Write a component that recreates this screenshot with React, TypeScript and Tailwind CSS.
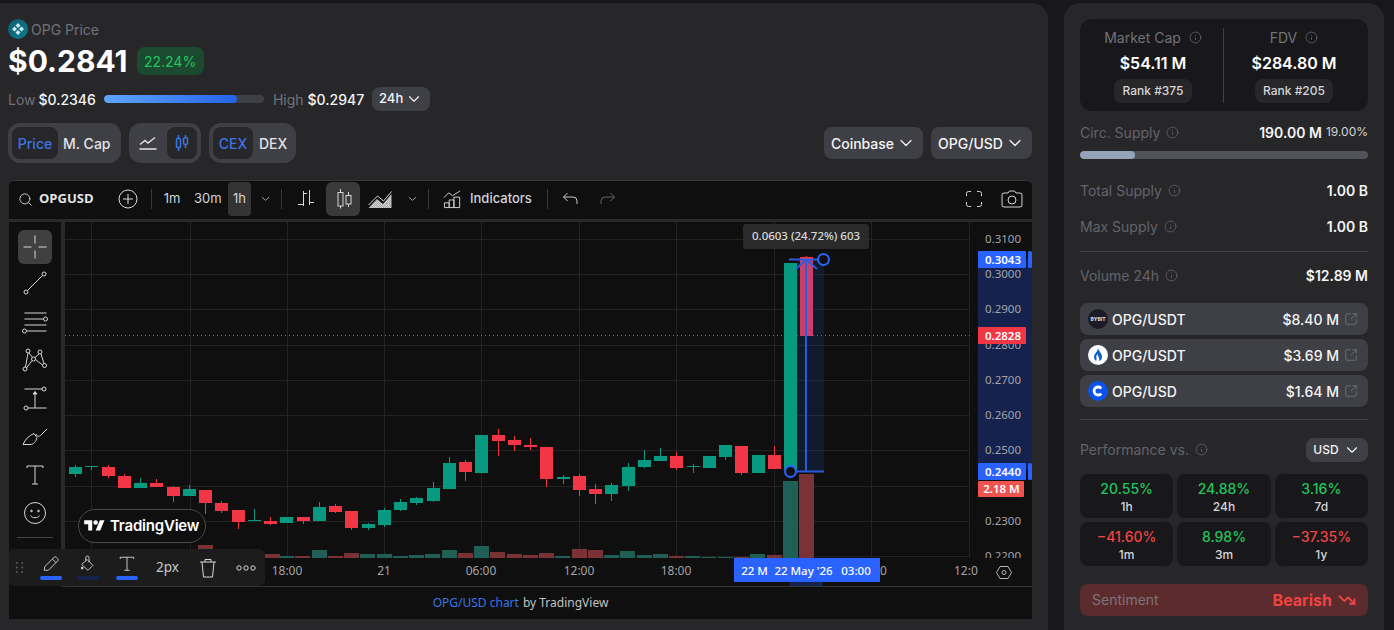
import React from "react";
import { ChevronDown, Info, SquareArrowOutUpRight, TrendingDown, Search } from "lucide-react";

const G = "#089981";
const R = "#f23645";
// x, bodyTop, bodyBottom, wickTop, wickBottom, colour
const candles: [number, number, number, number, number, string][] = [
  [69, 467, 474, 465, 477, G], [85, 466, 467, 466, 470, G], [102, 467, 476, 465, 478, R], [118, 476, 488, 474, 488, R],
  [134, 483, 488, 478, 488, G], [150, 483, 487, 479, 487, R], [167, 487, 496, 486, 502, R], [183, 489, 496, 485, 496, G],
  [199, 490, 503, 490, 514, R], [215, 503, 511, 501, 513, R], [232, 510, 522, 510, 529, R], [248, 520, 521, 509, 521, G],
  [264, 521, 524, 517, 525, R], [280, 517, 523, 517, 523, G], [297, 517, 521, 517, 524, R], [313, 507, 521, 502, 521, G],
  [329, 506, 512, 504, 513, R], [345, 511, 528, 511, 530, R], [362, 524, 528, 523, 530, G], [378, 510, 525, 508, 527, G],
  [394, 502, 510, 499, 511, G], [410, 498, 503, 497, 505, G], [427, 488, 501, 482, 502, G], [443, 463, 489, 457, 489, G],
  [459, 462, 472, 460, 481, R], [475, 435, 473, 435, 473, G], [492, 435, 441, 429, 456, R], [508, 440, 445, 436, 451, R],
  [524, 445, 447, 438, 450, R], [540, 447, 479, 447, 487, R], [557, 477, 479, 475, 484, G], [573, 476, 490, 474, 496, R],
  [589, 489, 494, 484, 504, R], [605, 485, 494, 483, 501, G], [622, 467, 486, 463, 491, G], [638, 460, 467, 450, 468, G],
  [654, 456, 461, 448, 461, G], [670, 456, 468, 452, 470, R], [687, 466, 467, 464, 473, G], [703, 456, 468, 456, 468, G],
  [719, 445, 457, 445, 460, G], [735, 446, 473, 446, 475, R], [752, 455, 473, 455, 473, G], [768, 455, 469, 446, 469, R],
  [784, 263, 470, 263, 470, G], [800, 257, 336, 256, 336, R],
];
const VG = "#1f5f56";
const VR = "#7a3236";
const volumes: [number, number, string][] = [
  [198, 545, VR], [265, 554, VR], [279, 556, VG], [295, 556, VR], [312, 550, VG], [328, 556, VR], [344, 553, VR], [360, 554, VG],
  [377, 554, VG], [393, 556, VG], [409, 555, VG], [425, 554, VG], [442, 550, VG], [458, 553, VR], [474, 546, VG],
  [490, 552, VR], [507, 554, VR], [523, 555, VR], [539, 553, VR], [555, 556, VG], [572, 549, VR], [588, 550, VR],
  [604, 555, VG], [620, 551, VG], [637, 555, VG], [653, 554, VG], [669, 556, VR], [685, 556, VG], [701, 557, VG],
  [718, 557, VG], [734, 557, VR], [750, 554, VG], [767, 555, VR], [783, 481, VG], [799, 474, VR],
];
const gridX = [91, 190, 287, 384, 481, 579, 676, 774, 871, 969];
const gridY = [239, 274, 309, 345, 380, 415, 450, 486, 521, 556];
const prices: [string, number][] = [
  ["0.3100", 239], ["0.3000", 274], ["0.2900", 309], ["0.2800", 345], ["0.2700", 380],
  ["0.2600", 415], ["0.2500", 450], ["0.2300", 521], ["0.2200", 556],
];
const times: [string, number][] = [["18:00", 287], ["21", 384], ["06:00", 481], ["12:00", 579], ["18:00", 676]];

function Chart() {
  const axisFont = "'Noto Sans', sans-serif";
  return (
    <svg viewBox="65 222 967 365" className="block w-[967px] h-[365px] shrink-0" style={{ fontFamily: axisFont }}>
      <rect x="65" y="222" width="967" height="365" fill="#0f0f0f" />
      {gridX.map((x) => <line key={x} x1={x + 0.5} x2={x + 0.5} y1="222" y2="556" stroke="#232323" />)}
      {gridY.map((y) => <line key={y} x1="65" x2="970" y1={y + 0.5} y2={y + 0.5} stroke="#232323" />)}
      <line x1="65" x2="975" y1="335.5" y2="335.5" stroke={R} strokeDasharray="1 3" />
      {volumes.map(([x, t, c], i) => <rect key={i} x={x} y={t} width="15" height={558 - t} fill={c} />)}
      <rect x="797" y="259" width="27" height="212" fill="#2962ff" fillOpacity="0.13" />
      {candles.map(([x, t, b, wt, wb, c], i) => (
        <g key={i}>
          <line x1={x + 6.5} x2={x + 6.5} y1={wt} y2={wb} stroke={c} />
          <rect x={x} y={t} width="13" height={b - t} fill={c} />
        </g>
      ))}
      <rect x="800" y="259" width="13" height="77" fill="#2962ff" fillOpacity="0.2" />
      <path d="M789 259.500H819M806 259.500V471M790 471.500H824M796 269L806 259.500L817 269" fill="none" stroke="#2d5be0" strokeWidth="2" />
      <circle cx="823.500" cy="259.500" r="5.500" fill="#0f0f0f" stroke="#2962ff" strokeWidth="2" />
      <circle cx="790.500" cy="471.500" r="5.500" fill="#0f0f0f" stroke="#2962ff" strokeWidth="2" />
      <rect x="743" y="224" width="126" height="25" rx="3" fill="#2a2a2a" />
      <text x="806" y="240" textAnchor="middle" fontSize="11.500" fontWeight="500" fill="#dbdbdb">0.0603 (24.72%) 603</text>

      <rect x="970" y="222" width="62" height="334" fill="#0f0f0f" />
      <rect x="978" y="259" width="54" height="212" fill="#14224d" />
      {prices.map(([p, y]) => <text key={p} x="1003" y={y + 3.500} textAnchor="middle" fontSize="11.500" fill="#a3a3a8">{p}</text>)}
      <rect x="978" y="251" width="48" height="17" rx="1" fill="#2962ff" />
      <text x="1003" y="263.500" textAnchor="middle" fontSize="11.500" fontWeight="600" fill="#fff">0.3043</text>
      <rect x="1028" y="251" width="4" height="17" rx="1.500" fill="#2962ff" />
      <rect x="978" y="327" width="48" height="17" rx="1" fill={R} />
      <text x="1003" y="339.500" textAnchor="middle" fontSize="11.500" fontWeight="600" fill="#fff">0.2828</text>
      <rect x="978" y="463" width="48" height="17" rx="1" fill="#2962ff" />
      <text x="1003" y="475.500" textAnchor="middle" fontSize="11.500" fontWeight="600" fill="#fff">0.2440</text>
      <rect x="1028" y="463" width="4" height="17" rx="1.500" fill="#2962ff" />
      <rect x="978" y="481" width="46" height="16" rx="1" fill="#ef5350" />
      <text x="1001.500" y="493" textAnchor="middle" fontSize="11.500" fontWeight="600" fill="#fff">2.18 M</text>

      <rect x="65" y="558" width="967" height="28" fill="#0f0f0f" />
      {times.map(([t, x]) => <text key={x} x={x} y="574.500" textAnchor="middle" fontSize="12" fill="#a3a3a8">{t}</text>)}
      <text x="880" y="574.500" fontSize="12" fill="#a3a3a8">0</text>
      <text x="954" y="574.500" fontSize="12" fill="#a3a3a8">12:0</text>
      <rect x="790" y="582" width="33" height="4" fill="#14224d" />
      <rect x="734" y="558" width="146" height="24" fill="#2962ff" />
      <text x="754.500" y="574.500" textAnchor="middle" fontSize="11.500" fontWeight="500" fill="#fff">22 M</text>
      <text x="803.500" y="574.500" textAnchor="middle" fontSize="11.500" fontWeight="500" fill="#fff">22 May '26</text>
      <text x="856" y="574.500" textAnchor="middle" fontSize="11.500" fontWeight="500" fill="#fff">03:00</text>
      <path d="M1000 566.500h8l3.500 6-3.500 6h-8l-3.500-6z" fill="none" stroke="#b8b8b8" />
      <circle cx="1004" cy="572.500" r="2" fill="none" stroke="#b8b8b8" />
      <line x1="65" x2="1032" y1="586.500" y2="586.500" stroke="#333" />
    </svg>
  );
}

function Tb({ children, className = "" }: { children: React.ReactNode; className?: string }) {
  return <svg viewBox="0 0 28 28" className={`w-7 h-7 shrink-0 ${className}`} fill="none" stroke="#d6d6d6" strokeWidth="1">{children}</svg>;
}
const Sep = ({ cls }: { cls: string }) => <div className={`w-px h-[20px] bg-[#3a3a3a] shrink-0 ${cls}`} />;
const Chev = ({ cls }: { cls: string }) => (
  <svg viewBox="0 0 10 6" className={`w-[9px] h-[6px] shrink-0 ${cls}`} fill="none" stroke="#a8a8a8"><path d="M1 1l4 3.500 4-3.500" /></svg>
);

function TopToolbar() {
  return (
    <div className="h-[38px] pb-[2px] shrink-0 flex items-center bg-[#0f0f0f] text-[#d1d4dc] text-[13px] font-['Inter',sans-serif]">
      <Search size={15} strokeWidth={1.400} className="ml-[9px] shrink-0 text-[#dcdcdc]" />
      <span className="ml-[6px] w-[53px] text-[13px] font-bold font-['Open_Sans',sans-serif] text-[#e4e4e4]">OPGUSD</span>
      <svg viewBox="0 0 20 20" className="ml-[26px] w-5 h-5 shrink-0" fill="none" stroke="#dcdcdc"><circle cx="10" cy="10" r="9" /><path d="M10 5v10M5 10h10" /></svg>
      <Sep cls="ml-[13px]" />
      <span className="ml-[10px] w-[20px] text-center">1m</span>
      <span className="ml-[12px] w-[26px] text-center">30m</span>
      <span className="ml-[8px] w-[23px] h-[34px] rounded bg-[#333] flex items-center justify-center">1h</span>
      <Chev cls="ml-[10px]" />
      <Sep cls="ml-[11px]" />
      <Tb className="ml-[9px]">
        <path d="M12.500 6v15M7 19.500h5.500M12.500 8.500h3.500M18.500 5v15M18.500 17.500h4.500" />
      </Tb>
      <div className="ml-[7px] w-[34px] h-[34px] rounded-md bg-[#3a3a3a] flex items-center justify-center">
        <Tb><path d="M11.500 4v3.500M11.500 21v2.500M19.500 7v3M19.500 19v3" /><rect x="9" y="7.500" width="5" height="13.500" /><rect x="17" y="10.500" width="5" height="8.500" /></Tb>
      </div>
      <svg viewBox="0 0 24 17" className="ml-[8px] w-6 h-[17px] shrink-0" fill="none" stroke="#d6d6d6">
        <defs><pattern id="hatch" width="2" height="2" patternUnits="userSpaceOnUse"><rect width="1" height="1" fill="#c8c8c8" /><rect x="1" y="1" width="1" height="1" fill="#c8c8c8" /></pattern></defs>
        <path d="M0.500 17L9 8l6 5 8.500-10V17z" fill="url(#hatch)" stroke="none" />
        <path d="M0.500 14L9.500 5l6 5L23.500 0.500" />
      </svg>
      <Chev cls="ml-[16px]" />
      <Sep cls="ml-[11px]" />
      <svg viewBox="0 0 20 20" className="ml-[14px] w-[19px] h-[19px] shrink-0" fill="none" stroke="#d6d6d6"><path d="M1 8l5-5 4 3 8-5M1.500 18.500h5v-5h-5zM6.500 18.500h5v-8h-5zM11.500 18.500h6v-11h-6z" /></svg>
      <span className="ml-[8px] w-[62px] whitespace-nowrap text-[13px] font-medium">Indicators</span>
      <Sep cls="ml-[15px]" />
      <svg viewBox="0 0 16 14" className="ml-[14px] w-4 h-[14px] shrink-0" fill="none" stroke="#c8c8c8"><path d="M5.500 1L1.500 5l4 4M1.500 5H11a4 4 0 014 4v3" /></svg>
      <svg viewBox="0 0 16 14" className="ml-[22px] w-4 h-[14px] shrink-0" fill="none" stroke="#666"><path d="M10.500 1l4 4-4 4M14.500 5H5a4 4 0 00-4 4v3" /></svg>
      <div className="flex-1" />
      <svg viewBox="0 0 18 18" className="w-[18px] h-[18px] shrink-0" fill="none" stroke="#d6d6d6"><path d="M6 1.500H3.500a2 2 0 00-2 2V6M12 1.500h2.500a2 2 0 012 2V6M6 16.500H3.500a2 2 0 01-2-2V12M12 16.500h2.500a2 2 0 002-2V12" /></svg>
      <svg viewBox="0 0 22 18" className="ml-[18px] mr-[9px] w-[22px] h-[18px] shrink-0" fill="none" stroke="#d6d6d6"><path d="M1 5a2 2 0 012-2h4l1.500-2h5L15 3h4a2 2 0 012 2v10a2 2 0 01-2 2H3a2 2 0 01-2-2z" /><circle cx="11" cy="10" r="4" /></svg>
    </div>
  );
}

function LeftTools() {
  return (
    <div className="w-[52px] h-[365px] shrink-0 bg-[#0f0f0f] flex flex-col items-center pt-2">
      <div className="w-[34px] h-[34px] rounded-md bg-[#404040] flex items-center justify-center">
        <Tb><path d="M14 2.500v8M14 17.500v8M2.500 14h8M17.500 14h8" /></Tb>
      </div>
      <Tb className="mt-[5px]"><circle cx="5" cy="23" r="2" /><circle cx="23" cy="5" r="2" /><path d="M6.500 21.500L21.500 6.500" /></Tb>
      <Tb className="mt-[10px]"><path d="M3.500 6h22M3.500 12h19M3.500 18h22M6 24h19.500" /><circle cx="24.500" cy="12" r="2" /><circle cx="3.500" cy="24" r="2" /></Tb>
      <Tb className="mt-[11px]"><circle cx="4" cy="23" r="2" /><circle cx="7" cy="5" r="2" /><circle cx="12.500" cy="13" r="2" /><circle cx="19" cy="6" r="2" /><circle cx="23.500" cy="19.500" r="2" /><path d="M4.500 21L7 7M8 7l3.500 4.500M14 11.500L18 8M20 8l3 9.500M5.500 22L11 14.500M14.500 13.500L21.500 19" /></Tb>
      <Tb className="mt-[10px]"><path d="M3.500 5h18M14 8v16M7 24h18.500" /><path d="M12 10l2-2.500 2 2.500z" fill="#d6d6d6" /><circle cx="23" cy="5" r="2" /><circle cx="5" cy="24" r="2" /></Tb>
      <Tb className="mt-[11px]"><path d="M2 21.500c2-5 6-9 11-11l3 4c-1 4-3 7-7 7zM2 21.500h7M15 11c1 3 4 3 6 0l5-5" /></Tb>
      <Tb className="mt-[9px]"><path d="M6 6h16M14 6v18M11 24h6M6 6v2M22 6v2" /></Tb>
      <Tb className="mt-[11px]"><circle cx="14" cy="14" r="10.500" /><circle cx="10.500" cy="12" r="0.800" fill="#d6d6d6" /><circle cx="17.500" cy="12" r="0.800" fill="#d6d6d6" /><path d="M9.500 16.500c1.500 3 7.500 3 9 0" /></Tb>
      <div className="mt-[10px] w-9 h-px bg-[#444]" />
    </div>
  );
}

function DrawBar() {
  return (
    <div className="absolute left-[-1px] top-[327px] w-[257px] h-[37px] rounded-md bg-[#1c1c1c] flex items-center text-[#c8c8c8] z-10">
      <svg viewBox="0 0 10 14" className="ml-[7px] w-[9px] h-[13px] shrink-0" fill="#555"><circle cx="2" cy="2" r="1.200" /><circle cx="8" cy="2" r="1.200" /><circle cx="2" cy="7" r="1.200" /><circle cx="8" cy="7" r="1.200" /><circle cx="2" cy="12" r="1.200" /><circle cx="8" cy="12" r="1.200" /></svg>
      <div className="ml-[10px] w-[34px] h-full relative flex justify-center pt-[6px]">
        <svg viewBox="0 0 20 20" className="w-[18px] h-[18px]" fill="none" stroke="#d6d6d6"><path d="M3 13L13.500 2.500a1.500 1.500 0 012.200 0l1.800 1.800a1.500 1.500 0 010 2.200L7 17H2.500zM11.500 4.500l4 4" /></svg>
        <div className="absolute left-[6px] bottom-[6px] w-[22px] h-[4px] rounded-sm bg-[#2962ff]" />
      </div>
      <div className="ml-[3px] w-[34px] h-full relative flex justify-center pt-[6px]">
        <svg viewBox="0 0 20 20" className="w-[18px] h-[18px]" fill="none" stroke="#d6d6d6"><path d="M3 10.500L9 5l6.500 6.500-5.500 5.500zM7.500 7V3a1.800 1.800 0 013.600 0v5" /><circle cx="3.500" cy="14.500" r="1.500" fill="#d6d6d6" stroke="none" /></svg>
        <div className="absolute left-[6px] bottom-[6px] w-[22px] h-[4px] bg-[#14224d]" />
      </div>
      <div className="ml-[5px] w-[34px] h-full relative flex justify-center pt-[6px]">
        <svg viewBox="0 0 20 20" className="w-[18px] h-[18px]" fill="none" stroke="#d6d6d6"><path d="M2.500 2.500h15M10 2.500V17M7 17h6M2.500 2.500v2M17.500 2.500v2" /></svg>
        <div className="absolute left-[6px] bottom-[6px] w-[22px] h-[4px] rounded-sm bg-[#2962ff]" />
      </div>
      <span className="ml-[12px] w-[23px] text-[13.500px] whitespace-nowrap font-['Noto_Sans',sans-serif]">2px</span>
      <svg viewBox="0 0 18 20" className="ml-[20px] w-[18px] h-[20px] shrink-0" fill="none" stroke="#d6d6d6"><path d="M1 4h16M6 4V1.500h6V4M3 4l1.500 15h9L15 4" /></svg>
      <svg viewBox="0 0 20 6" className="ml-[19px] w-5 h-[6px] shrink-0" fill="none" stroke="#d6d6d6"><circle cx="3" cy="3" r="2.200" /><circle cx="10" cy="3" r="2.200" /><circle cx="17" cy="3" r="2.200" /></svg>
    </div>
  );
}

function TvPill() {
  return (
    <div className="absolute left-[69px] top-[287px] w-[128px] h-[34px] rounded-full border border-[#4a4a4a] bg-[#0f0f0f] flex items-center pl-[5px] z-10">
      <svg viewBox="0 0 36 28" className="w-[21px] h-[16px] shrink-0" fill="#fff"><path d="M14 22H7V11H0V4h14v18zM28 22h-8l7.500-18h8L28 22z" /><circle cx="20" cy="8" r="4" /></svg>
      <span className="ml-[5px] text-[15px] font-semibold text-white tracking-[-0.2px] font-['Inter',sans-serif]">TradingView</span>
    </div>
  );
}

const cx = "inline-flex items-center justify-center";
function Select({ label, cls, size = 20, gap = "ml-[2px]" }: { label: string; cls: string; size?: number; gap?: string }) {
  return (
    <div className={`${cls} ${cx} rounded-lg bg-[#3f3f46] font-medium text-[#f4f4f5]`}>
      <span>{label}</span>
      <ChevronDown size={size} strokeWidth={1.500} className={gap} />
    </div>
  );
}

function OpgLogo() {
  return (
    <svg viewBox="0 0 20 20" className="w-5 h-5 shrink-0">
      <defs><linearGradient id="opg" x1="0" y1="0" x2="1" y2="1"><stop offset="0" stopColor="#0e5a70" /><stop offset="1" stopColor="#0b7f8f" /></linearGradient></defs>
      <circle cx="10" cy="10" r="10" fill="url(#opg)" />
      <path d="M10 4l2.500 2.500L10 9 7.500 6.500zM10 11l2.500 2.500L10 16l-2.500-2.500zM4 10l2.500-2.500L9 10l-2.500 2.500zM11 10l2.500-2.500L16 10l-2.500 2.500z" fill="#cfe9ee" />
    </svg>
  );
}

function LeftPanel() {
  return (
    <div className="w-[1048px] h-[627px] shrink-0 rounded-tr-2xl bg-[#27272a] pl-2 pr-4 pt-4 text-[14px]">
      <div className="h-5 flex items-center">
        <OpgLogo />
        <span className="ml-[3px] text-[#71717a]">OPG Price</span>
      </div>
      <div className="mt-2 h-7 flex items-center">
        <span className="text-[30px] font-bold text-white leading-none">$0.2841</span>
        <span className="ml-[9px] h-7 w-[67px] rounded-lg bg-[#1b4a30] text-[#22c55e] flex items-center justify-center">22.24%</span>
      </div>
      <div className="mt-3 h-6 flex items-center">
        <span className="text-[#71717a]">Low</span>
        <span className="ml-[3px] font-medium text-[#f4f4f5]">$0.2346</span>
        <div className="ml-2 w-40 h-2 rounded-full bg-[#3f3f46] overflow-hidden">
          <div className="w-[83%] h-full rounded-full bg-gradient-to-r from-[#60a5fa] to-[#2563eb]" />
        </div>
        <span className="ml-[9px] text-[#71717a]">High</span>
        <span className="ml-1 font-medium text-[#f4f4f5]">$0.2947</span>
        <Select label="24h" cls="ml-2 w-[58px] h-6 text-[13px]" size={18} />
      </div>
      <div className="mt-3 h-10 flex items-center justify-between pr-0">
        <div className="flex gap-2">
          <div className="h-10 w-[113px] rounded-xl bg-[#3f3f46] p-1 flex items-center font-medium">
            <span className="w-[46px] h-8 rounded-lg bg-[#27272a] text-[#3b74e6] flex items-center justify-center">Price</span>
            <span className="ml-[5px] text-[#e4e4e7]">M. Cap</span>
          </div>
          <div className="h-10 w-[72px] rounded-xl bg-[#3f3f46] p-1 flex items-center">
            <div className="w-8 h-8 flex items-center justify-center">
              <svg viewBox="0 0 18 16" className="w-[18px] h-4" fill="none" stroke="#e4e4e7" strokeWidth="1.400"><path d="M1 9.500l5-4 3 2.500 7-5.500M0.500 14h17" /></svg>
            </div>
            <div className="ml-1 w-8 h-8 rounded-lg bg-[#27272a] flex items-center justify-center">
              <svg viewBox="0 0 14 18" className="w-[14px] h-[18px]" fill="none" stroke="#3b74e6" strokeWidth="1.500"><path d="M3.500 1v3M3.500 14v3M10.500 1v2M10.500 11v3" /><rect x="1.500" y="4.500" width="4" height="9" rx="1" /><rect x="8.500" y="3.500" width="4" height="7" rx="2" /></svg>
            </div>
          </div>
          <div className="h-10 w-[87px] rounded-xl bg-[#3f3f46] p-1 flex items-center font-medium">
            <span className="w-10 h-8 rounded-lg bg-[#27272a] text-[#3b74e6] flex items-center justify-center">CEX</span>
            <span className="ml-[6px] text-[#e4e4e7]">DEX</span>
          </div>
        </div>
        <div className="flex gap-2">
          <Select label="Coinbase" cls="w-[99px] h-8" />
          <Select label="OPG/USD" cls="w-[101px] h-8" />
        </div>
      </div>
      <div className="mt-[17px] ml-px w-[1023px] h-[439px] rounded-t-md overflow-hidden bg-[#0f0f0f] border-t border-[#38383c] flex flex-col">
        <TopToolbar />
        <div className="h-[3px] bg-[#2a2a2a] shrink-0" />
        <div className="flex relative h-[365px] shrink-0">
          <LeftTools />
          <div className="w-1 h-[365px] bg-[#2a2a2a] shrink-0" />
          <Chart />
          <TvPill />
          <DrawBar />
        </div>
        <div className="flex-1 flex items-center justify-center text-[12px] text-[#c2c2c2] font-['Noto_Sans',sans-serif] bg-[#0f0f0f]">
          <span className="text-[#3b74e6]">OPG/USD chart</span>
          <span className="ml-1">by TradingView</span>
        </div>
      </div>
    </div>
  );
}

function InfoI({ cls = "ml-2" }: { cls?: string }) {
  return <Info size={13} strokeWidth={1.500} className={`${cls} text-[#63636b] shrink-0`} />;
}

function Metric({ label, value, rank, cls }: { label: string; value: string; rank: string; cls: string }) {
  return (
    <div className={`${cls} flex flex-col items-center`}>
      <div className="h-5 flex items-center text-[#71717a]">{label}<InfoI /></div>
      <div className="mt-[6px] h-[20px] flex items-center text-[16px] font-semibold text-white">{value}</div>
      <div className="mt-[6px] h-6 px-2 rounded-lg bg-[#27272a] flex items-center text-[12px] font-medium text-[#d4d4d8]">{rank}</div>
    </div>
  );
}

function Row({ label, value, cls }: { label: string; value: string; cls: string }) {
  return (
    <div className={`${cls} h-5 pb-[2px] flex items-center justify-between`}>
      <div className="flex items-center text-[#63636b]">{label}<InfoI cls="ml-[6px]" /></div>
      <span className="font-semibold text-[#f4f4f5]">{value}</span>
    </div>
  );
}

function Pair({ logo, pair, value }: { logo: React.ReactNode; pair: string; value: string }) {
  return (
    <div className="h-8 rounded-lg bg-[#3f3f46] flex items-center pl-2 pr-[10px]">
      {logo}
      <span className="ml-1 font-medium text-[#f4f4f5]">{pair}</span>
      <span className="ml-auto font-medium text-[#f4f4f5]">{value}</span>
      <SquareArrowOutUpRight size={14} strokeWidth={1.500} className="ml-[5px] text-[#71717a]" />
    </div>
  );
}

function Perf({ v, l, up }: { v: string; l: string; up: boolean }) {
  return (
    <div className="h-11 pt-[2px] rounded-lg bg-[#18181b] flex flex-col items-center justify-center">
      <span className={`text-[14px] leading-[18px] font-medium ${up ? "text-[#22c55e]" : "text-[#ef4444]"}`}>{v}</span>
      <span className="text-[12px] leading-[17px] font-medium text-[#d4d4d8]">{l}</span>
    </div>
  );
}

function RightPanel() {
  return (
    <div className="w-[320px] h-[627px] shrink-0 rounded-t-2xl bg-[#27272a] p-4 text-[14px]">
      <div className="h-[92px] rounded-xl bg-[#18181b] flex items-center relative">
        <Metric cls="w-[143px] pl-[3px]" label="Market Cap" value="$54.11 M" rank="Rank #375" />
        <div className="w-px h-[75px] bg-[#3f3f46]" />
        <Metric cls="w-[140px]" label="FDV" value="$284.80 M" rank="Rank #205" />
      </div>
      <div className="mt-3 h-5 pb-[2px] flex items-center justify-between">
        <div className="flex items-center text-[#63636b]">Circ. Supply<InfoI cls="ml-[6px]" /></div>
        <div className="flex items-center">
          <span className="font-semibold text-[#f4f4f5]">190.00 M</span>
          <span className="ml-1 text-[12px] text-[#d4d4d8]">19.00%</span>
        </div>
      </div>
      <div className="mt-2 h-2 rounded-full bg-[#52525b] overflow-hidden"><div className="w-[19%] h-full rounded-full bg-[#94a3b8]" /></div>
      <Row cls="mt-[22px]" label="Total Supply" value="1.00 B" />
      <Row cls="mt-4" label="Max Supply" value="1.00 B" />
      <div className="mt-[14px] h-px bg-[#3f3f46]" />
      <Row cls="mt-[14px]" label="Volume 24h" value="$12.89 M" />
      <div className="mt-[17px] flex flex-col gap-1">
        <Pair pair="OPG/USDT" value="$8.40 M" logo={
          <span className="w-5 h-5 rounded-full bg-[#1a1b26] flex items-center justify-center text-[5px] font-bold text-[#e4e4e7] leading-none shrink-0">BYBIT</span>
        } />
        <Pair pair="OPG/USDT" value="$3.69 M" logo={
          <svg viewBox="0 0 20 20" className="w-5 h-5 shrink-0"><circle cx="10" cy="10" r="10" fill="#fff" /><path d="M10 3c.5 3 4 5 4 9a4 4 0 01-3.500 4c1-1 1-2.500 0-4-.5-1-1-1.500-1-3-1 1-1.500 2-1 4 .2 1 0 2.500-.5 3A4.500 4.500 0 016 12c0-4 4-5 4-9z" fill="#0d63c7" /></svg>
        } />
        <Pair pair="OPG/USD" value="$1.64 M" logo={
          <svg viewBox="0 0 20 20" className="w-5 h-5 shrink-0"><circle cx="10" cy="10" r="10" fill="#0a53ea" /><path d="M13.200 7.500a4 4 0 100 5" fill="none" stroke="#fff" strokeWidth="2.800" /></svg>
        } />
      </div>
      <div className="mt-3 h-px bg-[#3f3f46]" />
      <div className="mt-[18px] h-6 flex items-center justify-between">
        <div className="pb-[2px] flex items-center text-[#63636b]">Performance vs.<InfoI cls="ml-[6px]" /></div>
        <Select label="USD" cls="w-[62px] h-6 text-[12px]" size={18} gap="ml-1" />
      </div>
      <div className="mt-3 grid grid-cols-3 gap-1">
        <Perf v="20.55%" l="1h" up />
        <Perf v="24.88%" l="24h" up />
        <Perf v="3.16%" l="7d" up />
        <Perf v="−41.60%" l="1m" up={false} />
        <Perf v="8.98%" l="3m" up />
        <Perf v="−37.35%" l="1y" up={false} />
      </div>
      <div className="mt-[18px] h-8 pb-px rounded-lg bg-[#5b2b2d] flex items-center justify-between pl-3 pr-3">
        <span className="text-[#7f7478]">Sentiment</span>
        <div className="flex items-center text-[#ef4444]">
          <span className="text-[16px] font-bold">Bearish</span>
          <TrendingDown size={18} strokeWidth={2.400} className="ml-[6px]" />
        </div>
      </div>
    </div>
  );
}

export default function App() {
  return (
    <div className="w-[1394px] h-[630px] overflow-hidden bg-[#18181b] pt-[3px] flex font-['Inter',sans-serif]">
      <LeftPanel />
      <div className="w-4 shrink-0" />
      <RightPanel />
    </div>
  );
}
